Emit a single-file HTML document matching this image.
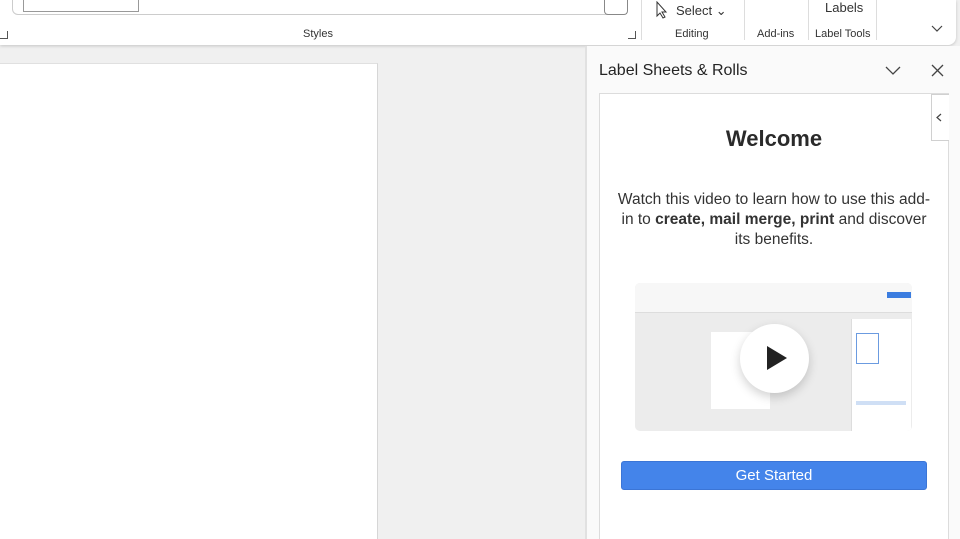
<!DOCTYPE html>
<html><head><meta charset="utf-8"><style>
*{margin:0;padding:0;box-sizing:border-box}
html,body{width:960px;height:539px;overflow:hidden}
body{background:#f0f0f0;font-family:"Liberation Sans",sans-serif;position:relative;color:#242424}
.abs{position:absolute}
.ribbon{left:0;top:0;width:956px;height:45px;background:#fff;border-radius:0 0 8px 0;box-shadow:0 1px 3px rgba(0,0,0,.18)}
.sm{font-size:11px;color:#333}
</style></head><body>
<div class="abs ribbon"></div>
<div class="abs" style="left:23px;top:0;width:116px;height:12px;border:1px solid #999;border-top:none;"></div>
<div class="abs" style="left:12px;top:0;width:616px;height:15px;border:1px solid #ccc;border-top:none;border-radius:0 0 6px 6px"></div>
<div class="abs" style="left:604px;top:0;width:24px;height:15px;border:1px solid #888;border-top:none;border-radius:0 0 4px 4px;background:#fff"></div>
<div class="abs sm" style="left:303px;top:28px">Styles</div>
<div class="abs" style="left:0;top:31px;width:8px;height:8px;border-right:1px solid #555;border-bottom:1px solid #555"></div>
<div class="abs" style="left:628px;top:31px;width:8px;height:8px;border-right:1px solid #555;border-bottom:1px solid #555"></div>
<div class="abs" style="left:641px;top:0;width:1px;height:40px;background:#ddd"></div>
<svg class="abs" style="left:655px;top:1px" width="14" height="18" viewBox="0 0 14 18"><path d="M2 1 L2 15 L5 12 L8 17 L10 16 L7 11 L11 11 Z" fill="#fff" stroke="#333" stroke-width="1"/></svg>
<div class="abs" style="left:676px;top:3px;font-size:13px;color:#333">Select ⌄</div>
<div class="abs sm" style="left:675px;top:28px">Editing</div>
<div class="abs" style="left:744px;top:0;width:1px;height:40px;background:#ddd"></div>
<div class="abs sm" style="left:757px;top:28px">Add-ins</div>
<div class="abs" style="left:808px;top:0;width:1px;height:40px;background:#ddd"></div>
<div class="abs" style="left:825px;top:0;font-size:13px;color:#333">Labels</div>
<div class="abs sm" style="left:815px;top:28px">Label Tools</div>
<div class="abs" style="left:876px;top:0;width:1px;height:40px;background:#ddd"></div>
<svg class="abs" style="left:931px;top:25px" width="12" height="8"><path d="M1 1 L6 6 L11 1" fill="none" stroke="#444" stroke-width="1.2"/></svg>

<div class="abs" style="left:0;top:63px;width:378px;height:476px;background:#fff;border-right:1px solid #d6d6d6;border-top:1px solid #e0e0e0"></div>

<div class="abs" style="left:585px;top:46px;width:375px;height:493px;background:#fafafa;border-left:2px solid #e1e1e1"></div>
<div class="abs" style="left:599px;top:62px;font-size:16px;color:#242424">Label Sheets &amp; Rolls</div>
<svg class="abs" style="left:885px;top:66px" width="16" height="10"><path d="M1 1 L8 8 L15 1" fill="none" stroke="#444" stroke-width="1.3"/></svg>
<svg class="abs" style="left:931px;top:64px" width="13" height="13"><path d="M1 1 L12 12 M12 1 L1 12" stroke="#444" stroke-width="1.3"/></svg>
<div class="abs" style="left:599px;top:93px;width:350px;height:446px;background:#fff;border:1px solid #dcdcdc;border-bottom:none"></div>
<div class="abs" style="left:931px;top:94px;width:18px;height:47px;background:#fff;border:1px solid #d0d0d0;border-right:none"></div>
<svg class="abs" style="left:936px;top:113px" width="6" height="9"><path d="M5 1 L1 4.5 L5 8" fill="none" stroke="#444" stroke-width="1.2"/></svg>
<div class="abs" style="left:600px;top:126px;width:348px;text-align:center;font-size:22px;font-weight:bold;color:#2a2a2a">Welcome</div>
<div class="abs" style="left:614px;top:190px;width:320px;text-align:center;font-size:15.5px;line-height:20px;color:#333">Watch this video to learn how to use this add-in to <b>create, mail merge, print</b> and discover its benefits.</div>

<div class="abs" style="left:635px;top:283px;width:277px;height:148px;background:#ececec;border-radius:5px;overflow:hidden">
 <div class="abs" style="left:0;top:0;width:277px;height:30px;background:#f7f7f7;border-bottom:1px solid #ddd"></div>
 <div class="abs" style="left:252px;top:9px;width:24px;height:6px;background:#3b7de0"></div>
 <div class="abs" style="left:76px;top:49px;width:59px;height:77px;background:#fff"></div>
 <div class="abs" style="left:216px;top:36px;width:60px;height:112px;background:#fff;border-left:1px solid #ddd"></div>
 <div class="abs" style="left:221px;top:50px;width:23px;height:31px;border:1px solid #6b9be0;background:#fff"></div>
 <div class="abs" style="left:221px;top:118px;width:50px;height:4px;background:#cfdff5"></div>
 <div class="abs" style="left:105px;top:41px;width:69px;height:69px;border-radius:50%;background:#fff;box-shadow:0 4px 10px rgba(0,0,0,.18)"></div>
 <svg class="abs" style="left:131px;top:62px" width="22" height="26"><path d="M1 1 L21 13 L1 25 Z" fill="#222"/></svg>
</div>

<div class="abs" style="left:621px;top:461px;width:306px;height:29px;background:#4484ea;border:1px solid #3b75d6;border-radius:3px;color:#fff;text-align:center;font-size:15px;line-height:27px">Get Started</div>
</body></html>
